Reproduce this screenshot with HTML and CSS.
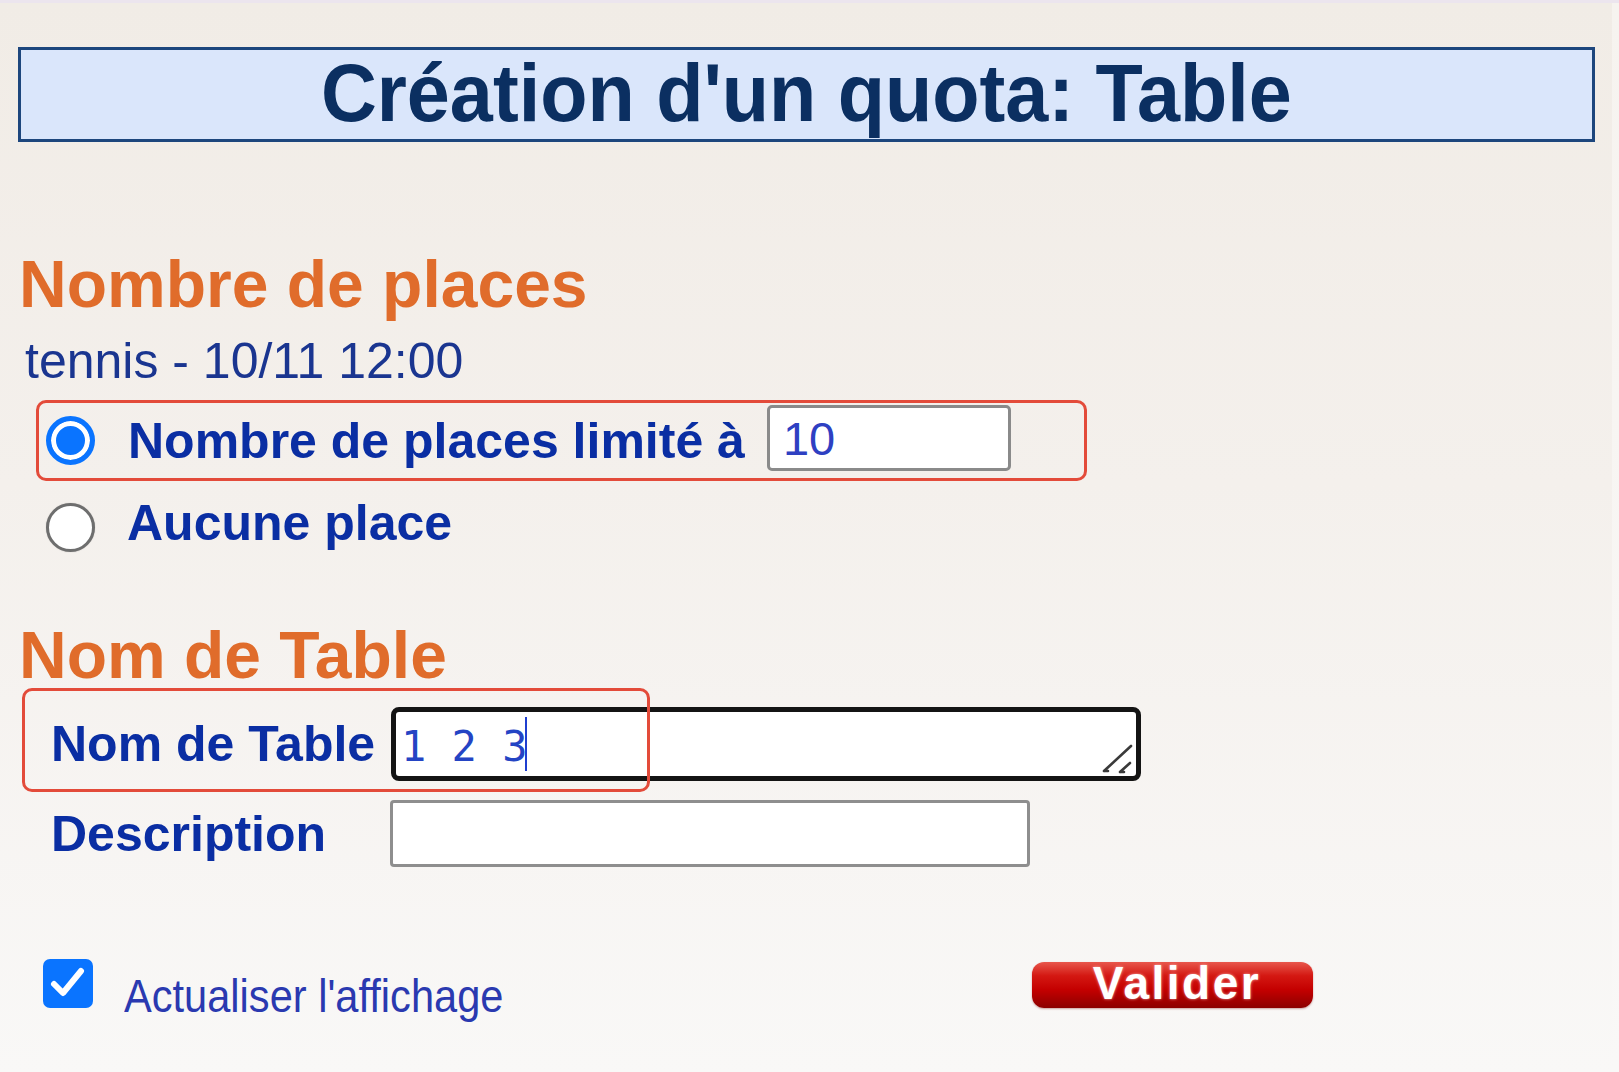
FILE: index.html
```html
<!DOCTYPE html>
<html lang="fr">
<head>
<meta charset="utf-8">
<title>Création d'un quota: Table</title>
<link rel="stylesheet" href="styles.css">
</head>
<body>
<div class="page">
  <h1 class="title-box"><span class="title-text">Création d'un quota: Table</span></h1>

  <h2 class="section-title">Nombre de places</h2>
  <p class="event">tennis - 10/11 12:00</p>

  <div class="option option-limited">
    <input type="radio" class="radio" name="places" id="opt-limit" checked>
    <label class="option-label" for="opt-limit">Nombre de places limité à</label>
    <input type="text" class="num-input" value="10">
  </div>
  <div class="option option-none">
    <input type="radio" class="radio" name="places" id="opt-none">
    <label class="option-label option-label-none" for="opt-none">Aucune place</label>
  </div>

  <h2 class="section-title section-title-2">Nom de Table</h2>
  <div class="fields">
    <div class="highlight"></div>
    <label class="field-label">Nom de Table</label>
    <div class="textarea" role="textbox">1 2 3<span class="caret"></span><svg class="grip" width="34" height="32" viewBox="0 0 34 32"><path d="M29 2 L2 27 M28 19 L18 28 M2 27 L6 27 M18 28 L22 28" stroke="#3a3a3a" stroke-width="2.6" stroke-linecap="round" fill="none"/></svg></div>
    <label class="field-label">Description</label>
    <input type="text" class="text-input" value="">
  </div>

  <div class="footer">
    <label class="refresh">
      <span class="checkbox"><svg width="50" height="49" viewBox="0 0 50 49"><path d="M11 25 L20 34 L38 12" stroke="#fff" stroke-width="6" stroke-linecap="round" stroke-linejoin="round" fill="none"/></svg></span>
      <span class="refresh-text">Actualiser l'affichage</span>
    </label>
    <button class="validate" type="button">Valider</button>
  </div>
</div>
</body>
</html>
```
FILE: styles.css
```css
html, body {
  margin: 0;
  padding: 0;
}
body {
  border-top: 3px solid #ece5ee;
  background: linear-gradient(to bottom, #f6f3ef, #f9f8f7);
  font-family: "Liberation Sans", Arial, sans-serif;
}
.page {
  width: 1612px;
  min-height: 1069px;
  box-sizing: border-box;
  padding: 0 17px;
  background: linear-gradient(to bottom, #f1ece6 0%, #f4f0ec 45%, #f9f8f7 100%);
  overflow: hidden;
}
.title-box {
  margin: 44px 0 0 1px;
  height: 95px;
  box-sizing: border-box;
  border: 3px solid #1d467d;
  background: #dae6fb;
  text-align: center;
  font-size: 81px;
  line-height: 86px;
  font-weight: bold;
  color: #0b2f61;
}
.title-text {
  display: inline-block;
  transform: scaleX(0.955);
}
.section-title {
  margin: 109px 0 0 2px;
  font-size: 66px;
  line-height: 66px;
  font-weight: bold;
  color: #e06c2b;
}
.section-title-2 {
  margin-top: 70px;
}
.event {
  margin: 19px 0 0 8px;
  font-size: 50px;
  line-height: 50px;
  color: #1a3590;
}
.option {
  display: flex;
  align-items: center;
}
.option-limited {
  margin: 14px 0 0 19px;
  width: 1051px;
  height: 81px;
  box-sizing: border-box;
  border: 3px solid #e34b3a;
  border-radius: 10px;
  padding-left: 7px;
}
.option-none {
  margin: 21px 0 0 29px;
  height: 50px;
}
.radio {
  appearance: none;
  -webkit-appearance: none;
  margin: 0 33px 0 0;
  width: 49px;
  height: 49px;
  box-sizing: border-box;
  border-radius: 50%;
  border: 3px solid #6e6e6e;
  background: #fff;
  box-shadow: 0 0 1px rgba(0, 0, 0, 0.3);
  flex: none;
}
.radio:checked {
  border: 5px solid #0a74ff;
  background: #0a74ff;
  box-shadow: inset 0 0 0 5px #fff;
}
.option-none .radio {
  margin-right: 32px;
}
.option-label {
  font-size: 50px;
  line-height: 50px;
  font-weight: bold;
  color: #0a2ea3;
}
.option-label-none {
  margin-bottom: 8px;
}
.num-input {
  margin: 0 0 5px 22px;
  width: 244px;
  height: 66px;
  box-sizing: border-box;
  border: 3px solid #8a8a8a;
  border-radius: 5px;
  padding: 0 0 0 13px;
  background: #fff;
  font-family: "Liberation Sans", Arial, sans-serif;
  font-size: 47px;
  color: #2e40c2;
  outline: none;
}
.fields {
  position: relative;
  margin-top: 19px;
  padding-left: 34px;
  display: grid;
  grid-template-columns: 340px 750px;
  row-gap: 19px;
  align-items: center;
}
.highlight {
  position: absolute;
  left: 5px;
  top: -19px;
  width: 628px;
  height: 104px;
  box-sizing: border-box;
  border: 3px solid #e34b3a;
  border-radius: 10px;
  pointer-events: none;
  z-index: 2;
}
.field-label {
  font-size: 50px;
  line-height: 50px;
  font-weight: bold;
  color: #0a2ea3;
}
.textarea {
  position: relative;
  width: 750px;
  height: 74px;
  box-sizing: border-box;
  border: 5px solid #141414;
  border-radius: 8px;
  background: #fff;
  padding: 12px 0 0 5px;
  font-family: "DejaVu Sans Mono", "Liberation Mono", monospace;
  font-size: 42px;
  line-height: 46px;
  color: #2444c4;
  white-space: pre;
}
.caret {
  display: inline-block;
  width: 2px;
  height: 54px;
  margin: -20px 0 0 -2px;
  background: #1f3fd0;
  vertical-align: -10px;
}
.grip {
  position: absolute;
  right: 0;
  bottom: 0;
}
.text-input {
  margin-left: -1px;
  width: 640px;
  height: 67px;
  box-sizing: border-box;
  border: 3px solid #8e8e8e;
  border-radius: 4px;
  background: #fff;
  outline: none;
}
.footer {
  margin-top: 92px;
  display: grid;
  grid-template-columns: 1015px 281px;
  align-items: start;
}
.refresh {
  display: flex;
  align-items: flex-start;
  padding-left: 26px;
}
.checkbox {
  display: block;
  width: 50px;
  height: 49px;
  border-radius: 7px;
  background: #0a74ff;
  flex: none;
}
.checkbox svg {
  display: block;
}
.refresh-text {
  display: inline-block;
  margin: 13px 0 0 31px;
  font-size: 47px;
  line-height: 47px;
  color: #2a39b0;
  transform: scaleX(0.885);
  transform-origin: left center;
  white-space: nowrap;
}
.validate {
  margin-top: 3px;
  width: 281px;
  height: 46px;
  padding: 0 0 3px 9px;
  border: none;
  border-radius: 12px;
  background: linear-gradient(to bottom, #e8574c 0%, #d41812 30%, #c40000 60%, #8c0000 100%);
  box-shadow: 0 1px 2px rgba(120, 0, 0, 0.35);
  font-family: "Liberation Sans", Arial, sans-serif;
  font-size: 46px;
  line-height: 43px;
  font-weight: bold;
  letter-spacing: 2.5px;
  color: #fff;
  text-shadow: 0 0 3px rgba(255, 210, 210, 0.8);
}
```
